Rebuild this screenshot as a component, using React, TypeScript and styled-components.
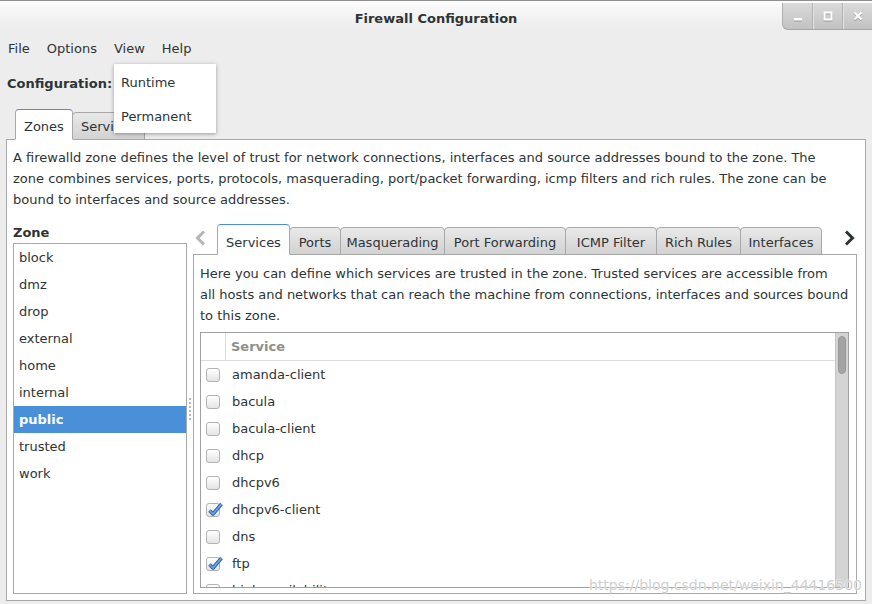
import React from "react";
import styled, { createGlobalStyle } from "styled-components";

const GlobalStyle = createGlobalStyle`
  html, body { margin: 0; padding: 0; }
  body {
    font-family: "DejaVu Sans", "Noto Sans", sans-serif;
    font-size: 13px;
    color: #2e3436;
    background: #ededed;
  }
  * { box-sizing: border-box; }
`;

const Window = styled.div`
  position: relative;
  width: 872px;
  height: 604px;
  overflow: hidden;
  background: #ededed;
  display: flex;
  flex-direction: column;
`;

const TitleBar = styled.div`
  flex: none;
  height: 31px;
  display: grid;
  grid-template-columns: 90px 1fr 90px;
  background: linear-gradient(#fcfcfc, #f0f0f0 70%, #ececec);
  border-top: 1px solid #8e8e8e;
`;

const Title = styled.div`
  grid-column: 2;
  text-align: center;
  font-weight: bold;
  line-height: 17px;
  padding-top: 9px;
  color: #2e3436;
`;

const Controls = styled.div`
  grid-column: 3;
  align-self: start;
  margin-top: 2px;
  height: 27px;
  display: flex;
  background: linear-gradient(#dadada, #c2c2c2);
  border-left: 1px solid #aeaeae;
  border-bottom: 1px solid #a6a6a6;
  border-bottom-left-radius: 6px;
`;

const ControlButton = styled.div<{ $first?: boolean }>`
  flex: 1;
  display: flex;
  align-items: center;
  justify-content: center;
  border-left: ${(p) => (p.$first ? "none" : "1px solid #b3b3b3")};
  box-shadow: ${(p) => (p.$first ? "none" : "inset 1px 0 0 #e2e2e2")};
`;

const MenuBar = styled.div`
  flex: none;
  height: 34px;
  display: flex;
  align-items: center;
  gap: 1px;
`;

const MenuItem = styled.div`
  padding: 0 8px;
  margin-top: 2px;
  line-height: 20px;
`;

const ConfigRow = styled.div`
  flex: none;
  height: 44px;
  padding: 0 0 8px 7px;
  display: flex;
  align-items: center;
  font-weight: bold;
`;

const Popup = styled.div`
  position: absolute;
  left: 114px;
  top: 64px;
  width: 102px;
  height: 69px;
  padding-top: 1px;
  background: #ffffff;
  box-shadow: 0 1px 4px rgba(0, 0, 0, 0.35);
  display: flex;
  flex-direction: column;
  z-index: 10;
`;

const PopupItem = styled.div`
  height: 35px;
  display: flex;
  align-items: center;
  padding-left: 7px;
`;

const Notebook = styled.div`
  flex: 1;
  min-height: 0;
  margin: 0 6px 3px;
  display: flex;
  flex-direction: column;
`;

const TabStrip = styled.div`
  flex: none;
  height: 30px;
  display: flex;
  align-items: flex-end;
  padding-left: 9px;
`;

const Tab = styled.div<{ $active?: boolean; $w?: number; $inner?: boolean }>`
  position: relative;
  z-index: ${(p) => (p.$active ? 2 : 1)};
  height: ${(p) => (p.$active ? "31px" : "28px")};
  margin-bottom: -1px;
  ${(p) => (p.$w ? `width: ${p.$w}px;` : "padding: 0 8px;")}
  display: flex;
  justify-content: center;
  align-items: center;
  padding-top: ${(p) => (p.$active ? 3 : 1) + (p.$inner ? 2 : 0)}px;
  white-space: nowrap;
  border: 1px solid #a8a8a8;
  border-bottom: ${(p) => (p.$active ? "1px solid #ffffff" : "1px solid #a8a8a8")};
  border-top-color: ${(p) => (p.$active ? "#4a90d9" : "#a8a8a8")};
  border-radius: 4px 4px 0 0;
  background: ${(p) =>
    p.$active ? "#ffffff" : "linear-gradient(#e9e9e9, #d2d2d2)"};
  & + & {
    margin-left: -1px;
  }
`;

const Page = styled.div`
  flex: 1;
  min-height: 0;
  background: #ffffff;
  border: 1px solid #a8a8a8;
  padding: 7px 8px 6px 6px;
  display: flex;
  flex-direction: column;
`;

const Description = styled.div`
  line-height: 21px;
  white-space: nowrap;
`;

const Split = styled.div`
  flex: 1;
  min-height: 0;
  margin-top: 13px;
  display: flex;
`;

const ZoneColumn = styled.div`
  width: 174px;
  flex: none;
  display: flex;
  flex-direction: column;
`;

const ZoneLabel = styled.div`
  font-weight: bold;
  line-height: 18px;
  padding-top: 1px;
  margin-bottom: 1px;
`;

const ZoneList = styled.div`
  flex: 1;
  border: 1px solid #a8a8a8;
  background: #ffffff;
`;

const ZoneItem = styled.div<{ $selected?: boolean }>`
  height: 27px;
  line-height: 27px;
  padding-left: 5px;
  background: ${(p) => (p.$selected ? "#4a90d9" : "transparent")};
  color: ${(p) => (p.$selected ? "#ffffff" : "#2e3436")};
  font-weight: ${(p) => (p.$selected ? "bold" : "normal")};
`;

const Handle = styled.div`
  width: 6px;
  flex: none;
  display: flex;
  align-items: center;
  justify-content: center;
`;

const HandleDots = styled.div`
  width: 2px;
  height: 22px;
  background: repeating-linear-gradient(#b8b8b8 0 2px, transparent 2px 4px);
`;

const RightColumn = styled.div`
  flex: 1;
  min-width: 0;
  display: flex;
  flex-direction: column;
  padding-top: 2px;
`;

const InnerTabRow = styled.div`
  flex: none;
  height: 29px;
  display: flex;
  align-items: flex-end;
`;

const Arrow = styled.div<{ $side: "left" | "right" }>`
  flex: none;
  width: ${(p) => (p.$side === "left" ? "24px" : "auto")};
  ${(p) => (p.$side === "right" ? "flex: 1;" : "")}
  height: 29px;
  display: flex;
  align-items: center;
  justify-content: ${(p) => (p.$side === "left" ? "flex-start" : "flex-end")};
  padding: ${(p) => (p.$side === "left" ? "0 0 4px 2px" : "0 2px 4px 0")};
`;

const InnerPage = styled.div`
  flex: 1;
  min-height: 0;
  background: #ffffff;
  border: 1px solid #a8a8a8;
  padding: 8px 7px 5px 6px;
  display: flex;
  flex-direction: column;
`;

const Table = styled.div`
  flex: 1;
  min-height: 0;
  margin-top: 6px;
  border: 1px solid #a0a0a0;
  display: flex;
  overflow: hidden;
`;

const TableBody = styled.div`
  flex: 1;
  min-width: 0;
  display: flex;
  flex-direction: column;
  overflow: hidden;
`;

const HeaderRow = styled.div`
  flex: none;
  height: 28px;
  display: flex;
  border-bottom: 1px solid #dcdcdc;
`;

const HeaderCheckCell = styled.div`
  width: 25px;
  border-right: 1px solid #dcdcdc;
`;

const HeaderLabel = styled.div`
  padding-left: 5px;
  line-height: 27px;
  font-weight: bold;
  color: #8d8f8a;
`;

const Row = styled.div`
  flex: none;
  height: 27px;
  display: flex;
  align-items: center;
`;

const CheckCell = styled.div`
  width: 31px;
  flex: none;
  padding-left: 5px;
  display: flex;
  align-items: center;
`;

const CheckBox = styled.div`
  position: relative;
  width: 14px;
  height: 14px;
  border: 1px solid #b2b2b2;
  border-radius: 3px;
  background: linear-gradient(#ffffff, #e4e4e4);
`;

const CheckMark = styled.svg`
  position: absolute;
  left: 0px;
  top: -3px;
`;

const Scrollbar = styled.div`
  flex: none;
  width: 13px;
  background: #d4d4d4;
  border-left: 1px solid #c6c6c6;
  padding: 3px 2px;
`;

const Thumb = styled.div`
  height: 38px;
  border-radius: 4px;
  background: #a4a4a4;
  border: 1px solid #989898;
`;

const Watermark = styled.div`
  position: absolute;
  right: 10px;
  bottom: 11px;
  font-family: "DejaVu Sans", sans-serif;
  font-size: 14px;
  color: rgba(190, 190, 190, 0.75);
  text-shadow: 0 0 1px #ffffff, 0 0 2px #ffffff;
  pointer-events: none;
  z-index: 20;
`;

const zones = ["block", "dmz", "drop", "external", "home", "internal", "public", "trusted", "work"];

const services: { name: string; checked?: boolean }[] = [
  { name: "amanda-client" },
  { name: "bacula" },
  { name: "bacula-client" },
  { name: "dhcp" },
  { name: "dhcpv6" },
  { name: "dhcpv6-client", checked: true },
  { name: "dns" },
  { name: "ftp", checked: true },
  { name: "high-availability" },
];

const innerTabs: { label: string; w: number }[] = [
  { label: "Services", w: 73 },
  { label: "Ports", w: 52 },
  { label: "Masquerading", w: 105 },
  { label: "Port Forwarding", w: 122 },
  { label: "ICMP Filter", w: 92 },
  { label: "Rich Rules", w: 85 },
  { label: "Interfaces", w: 82 },
];

const ControlIcon: React.FC<{ kind: "min" | "max" | "close" }> = ({ kind }) => (
  <svg width="12" height="12" viewBox="0 0 12 12">
    {kind === "min" && (
      <>
        <rect x="2" y="9" width="8" height="2.5" fill="#9a9a9a" />
        <rect x="2" y="8" width="8" height="2.5" fill="#ffffff" />
      </>
    )}
    {kind === "max" && (
      <>
        <rect x="2.5" y="3.5" width="7" height="7" fill="none" stroke="#9a9a9a" strokeWidth="2" />
        <rect x="2.5" y="2.5" width="7" height="7" fill="none" stroke="#ffffff" strokeWidth="2" />
      </>
    )}
    {kind === "close" && (
      <>
        <path d="M2.5 3.5 L9.5 10.5 M9.5 3.5 L2.5 10.5" stroke="#9a9a9a" strokeWidth="2.2" />
        <path d="M2.5 2.5 L9.5 9.5 M9.5 2.5 L2.5 9.5" stroke="#ffffff" strokeWidth="2.2" />
      </>
    )}
  </svg>
);

const Chevron: React.FC<{ dir: "left" | "right"; color: string }> = ({ dir, color }) => (
  <svg width="11" height="16" viewBox="0 0 11 16">
    <path
      d={dir === "left" ? "M9 1.5 L2.5 8 L9 14.5" : "M2 1.5 L8.5 8 L2 14.5"}
      fill="none"
      stroke={color}
      strokeWidth="3"
    />
  </svg>
);

const Check: React.FC = () => (
  <CheckMark width="17" height="17" viewBox="0 0 17 17">
    <path d="M2.5 9.5 L6 13 L14.5 3" fill="none" stroke="#2b64a8" strokeWidth="3.6" strokeLinejoin="round" />
    <path d="M2.5 9.5 L6 13 L14.5 3" fill="none" stroke="#6fa8e8" strokeWidth="1.6" strokeLinejoin="round" />
  </CheckMark>
);

export default function App() {
  return (
    <>
      <GlobalStyle />
      <Window>
        <TitleBar>
          <Title>Firewall Configuration</Title>
          <Controls>
            <ControlButton $first>
              <ControlIcon kind="min" />
            </ControlButton>
            <ControlButton>
              <ControlIcon kind="max" />
            </ControlButton>
            <ControlButton>
              <ControlIcon kind="close" />
            </ControlButton>
          </Controls>
        </TitleBar>

        <MenuBar>
          <MenuItem>File</MenuItem>
          <MenuItem>Options</MenuItem>
          <MenuItem>View</MenuItem>
          <MenuItem>Help</MenuItem>
        </MenuBar>

        <ConfigRow>Configuration:</ConfigRow>

        <Popup>
          <PopupItem>Runtime</PopupItem>
          <PopupItem>Permanent</PopupItem>
        </Popup>

        <Notebook>
          <TabStrip>
            <Tab $active>Zones</Tab>
            <Tab>Services</Tab>
          </TabStrip>
          <Page>
            <Description>
              A firewalld zone defines the level of trust for network connections, interfaces and source addresses bound to the zone. The
              <br />
              zone combines services, ports, protocols, masquerading, port/packet forwarding, icmp filters and rich rules. The zone can be
              <br />
              bound to interfaces and source addresses.
            </Description>
            <Split>
              <ZoneColumn>
                <ZoneLabel>Zone</ZoneLabel>
                <ZoneList>
                  {zones.map((z) => (
                    <ZoneItem key={z} $selected={z === "public"}>
                      {z}
                    </ZoneItem>
                  ))}
                </ZoneList>
              </ZoneColumn>
              <Handle>
                <HandleDots />
              </Handle>
              <RightColumn>
                <InnerTabRow>
                  <Arrow $side="left">
                    <Chevron dir="left" color="#b5b5b5" />
                  </Arrow>
                  {innerTabs.map((t, i) => (
                    <Tab key={t.label} $active={i === 0} $w={t.w} $inner>
                      {t.label}
                    </Tab>
                  ))}
                  <Arrow $side="right">
                    <Chevron dir="right" color="#2e3436" />
                  </Arrow>
                </InnerTabRow>
                <InnerPage>
                  <Description>
                    Here you can define which services are trusted in the zone. Trusted services are accessible from
                    <br />
                    all hosts and networks that can reach the machine from connections, interfaces and sources bound
                    <br />
                    to this zone.
                  </Description>
                  <Table>
                    <TableBody>
                      <HeaderRow>
                        <HeaderCheckCell />
                        <HeaderLabel>Service</HeaderLabel>
                      </HeaderRow>
                      {services.map((s) => (
                        <Row key={s.name}>
                          <CheckCell>
                            <CheckBox>{s.checked && <Check />}</CheckBox>
                          </CheckCell>
                          {s.name}
                        </Row>
                      ))}
                    </TableBody>
                    <Scrollbar>
                      <Thumb />
                    </Scrollbar>
                  </Table>
                </InnerPage>
              </RightColumn>
            </Split>
          </Page>
        </Notebook>

        <Watermark>https://blog.csdn.net/weixin_44416500</Watermark>
      </Window>
    </>
  );
}
